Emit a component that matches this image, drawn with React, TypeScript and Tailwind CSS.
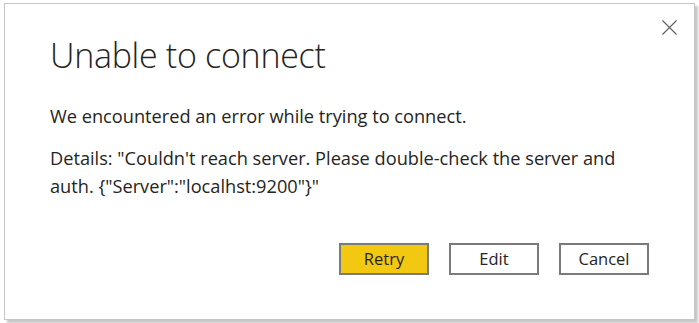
import { X } from "lucide-react"

const details = 'Details: "Couldn\'t reach server. Please double-check the server and auth. {"Server":"localhst:9200"}"'

export default function App() {
    return (
        <div className="w-[699px] h-[323px] bg-white pt-[3px] pl-[4px]" style={{ fontFamily: '"Open Sans", "Noto Sans", sans-serif' }}>
            <div className="relative w-[691px] h-[317px] bg-white border border-[#c6c6c6] shadow-[3px_3px_2px_rgba(0,0,0,0.22)] pl-[45px]">
                <button className="absolute top-[10px] right-[11px] text-[#605e5c]">
                    <X size={27} strokeWidth={1} />
                </button>

                <h1 className="pt-[29px] text-[34px] leading-[44px] font-light text-[#252423] tracking-[-0.3px]">Unable to connect</h1>

                <div className="w-[600px] text-[18.2px] leading-[28px] text-[#252423]">
                    <p className="mt-[25px]">We encountered an error while trying to connect.</p>
                    <p className="mt-[14px]">{details}</p>
                </div>

                <div className="flex justify-end gap-[20px] mt-[43px] mr-[45px]">
                    <button className="w-[90px] h-[32px] border-2 border-[#7a7a7a] bg-[#f2c811] text-[16.5px] text-[#252423]">Retry</button>
                    <button className="w-[90px] h-[32px] border-2 border-[#7a7a7a] bg-white text-[16.5px] text-[#252423]">Edit</button>
                    <button className="w-[90px] h-[32px] border-2 border-[#7a7a7a] bg-white text-[16.5px] text-[#252423]">Cancel</button>
                </div>
            </div>
        </div>
    )
}
